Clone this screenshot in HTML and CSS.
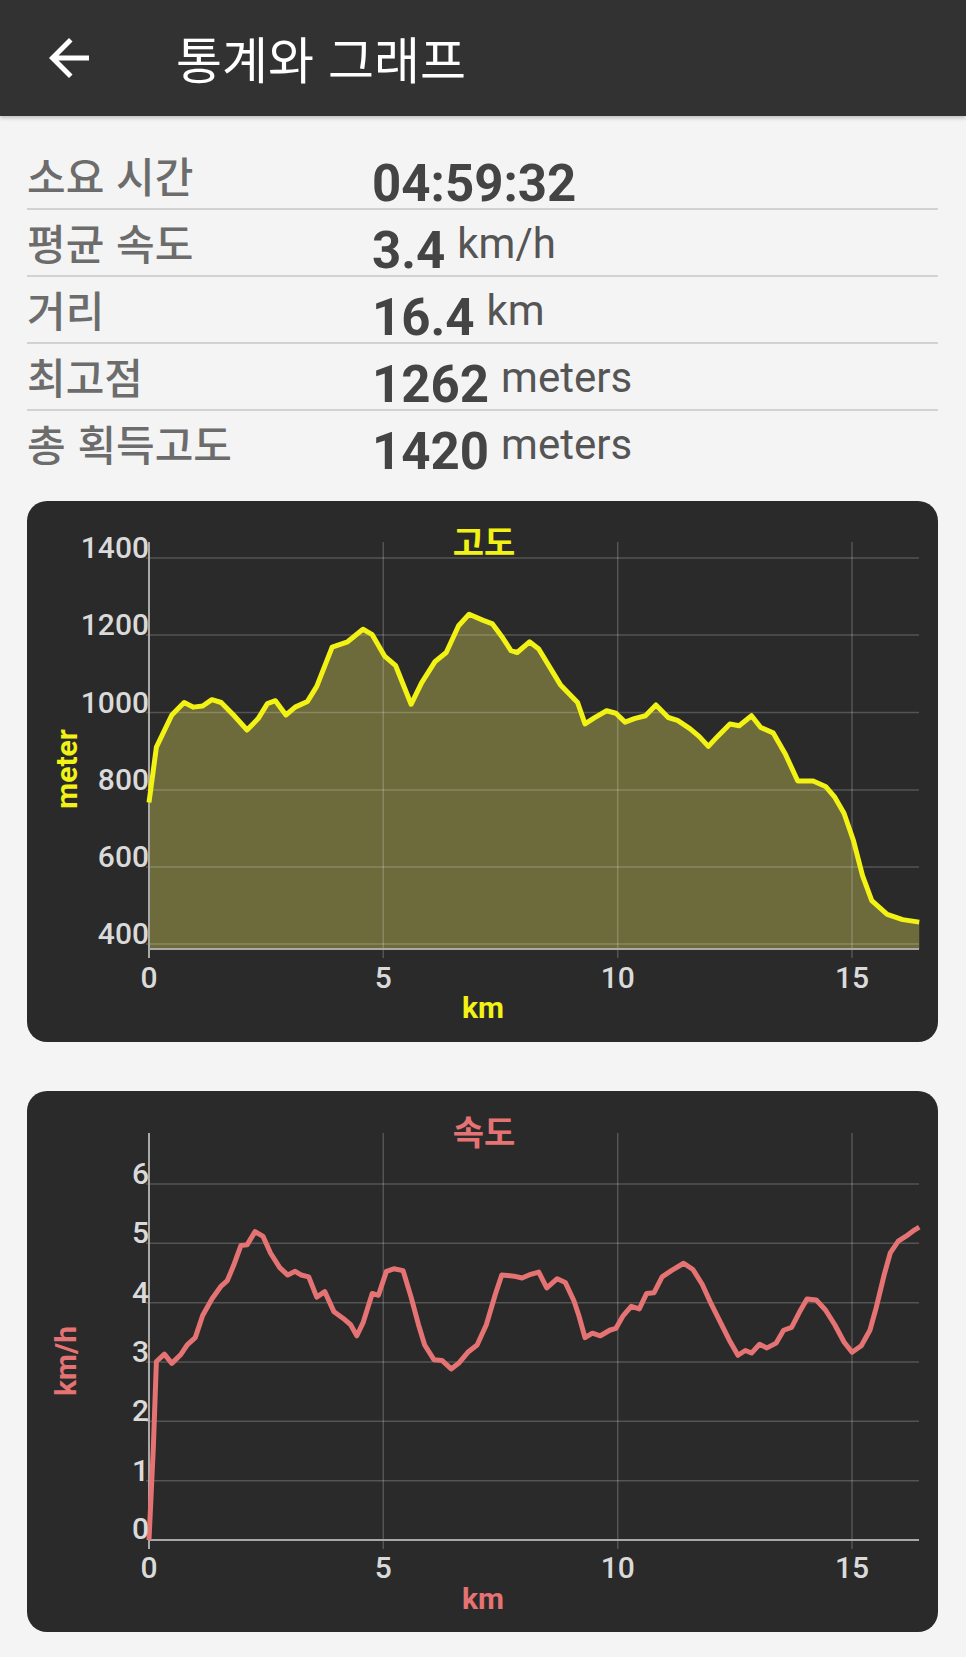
FILE: index.html
```html
<!DOCTYPE html>
<html lang="ko">
<head>
<meta charset="utf-8">
<title>통계와 그래프</title>
<link rel="stylesheet" href="styles.css">
</head>
<body>
<header class="appbar">
  <svg class="back" viewBox="0 0 24 24" width="60" height="60" aria-label="뒤로"><path d="M20 11H7.83l5.59-5.59L12 4l-8 8 8 8 1.41-1.41L7.83 13H20v-2z"/></svg>
  <h1 class="title">통계와 그래프</h1>
</header>
<main class="content">
  <section class="stats">
    <div class="row"><span class="label">소요 시간</span><span class="value">04:59:32</span></div>
    <div class="row"><span class="label">평균 속도</span><span class="value">3.4</span><span class="unit">km/h</span></div>
    <div class="row"><span class="label">거리</span><span class="value">16.4</span><span class="unit">km</span></div>
    <div class="row"><span class="label">최고점</span><span class="value">1262</span><span class="unit">meters</span></div>
    <div class="row"><span class="label">총 획득고도</span><span class="value">1420</span><span class="unit">meters</span></div>
  </section>

  <section class="card">
    <svg class="chart" viewBox="0 0 911 541" width="911" height="541">
      <polygon class="elev-fill" transform="matrix(0.6167 0 0 0.35714 -27.86 -11)" points="243,875 255,720 280,630 300,595 315,608 330,605 345,587 360,595 380,630 402,672 420,640 435,598 448,590 465,630 480,608 500,592 515,550 540,440 565,425 590,390 605,405 625,465 643,492 668,600 685,540 707,480 725,455 745,380 762,348 785,365 800,375 815,410 830,450 840,455 860,425 875,445 910,545 938,595 950,655 965,638 985,618 1000,625 1015,650 1030,640 1048,632 1065,602 1085,637 1100,645 1120,668 1135,690 1150,718 1165,690 1185,655 1200,660 1220,632 1235,665 1255,680 1275,740 1295,815 1320,815 1340,830 1355,860 1370,905 1385,980 1400,1080 1415,1150 1440,1188 1465,1203 1492,1210 1492,1285 243,1285"/>
      <g class="grid">
        <line x1="119" y1="57" x2="892" y2="57"/>
        <line x1="119" y1="134" x2="892" y2="134"/>
        <line x1="119" y1="211.5" x2="892" y2="211.5"/>
        <line x1="119" y1="289" x2="892" y2="289"/>
        <line x1="119" y1="366" x2="892" y2="366"/>
        <line x1="119" y1="443" x2="892" y2="443"/>
        <line x1="356.3" y1="41" x2="356.3" y2="457"/>
        <line x1="590.7" y1="41" x2="590.7" y2="457"/>
        <line x1="825" y1="41" x2="825" y2="457"/>
      </g>
      <g class="axis">
        <line x1="122" y1="41" x2="122" y2="457"/>
        <line x1="122" y1="448" x2="892" y2="448"/>
      </g>
      <polyline class="elev-line" transform="matrix(0.6167 0 0 0.35714 -27.86 -11)" points="243,875 255,720 280,630 300,595 315,608 330,605 345,587 360,595 380,630 402,672 420,640 435,598 448,590 465,630 480,608 500,592 515,550 540,440 565,425 590,390 605,405 625,465 643,492 668,600 685,540 707,480 725,455 745,380 762,348 785,365 800,375 815,410 830,450 840,455 860,425 875,445 910,545 938,595 950,655 965,638 985,618 1000,625 1015,650 1030,640 1048,632 1065,602 1085,637 1100,645 1120,668 1135,690 1150,718 1165,690 1185,655 1200,660 1220,632 1235,665 1255,680 1275,740 1295,815 1320,815 1340,830 1355,860 1370,905 1385,980 1400,1080 1415,1150 1440,1188 1465,1203 1492,1210"/>
      <g class="ylabels">
        <text x="122" y="57">1400</text>
        <text x="122" y="134">1200</text>
        <text x="122" y="211.5">1000</text>
        <text x="122" y="289">800</text>
        <text x="122" y="366">600</text>
        <text x="122" y="443">400</text>
      </g>
      <g class="xlabels">
        <text x="122" y="487">0</text>
        <text x="356.3" y="487">5</text>
        <text x="590.7" y="487">10</text>
        <text x="825" y="487">15</text>
      </g>
      <text class="ctitle elev" x="457" y="54">고도</text>
      <text class="xtitle elev" x="456" y="517">km</text>
      <text class="ytitle elev" transform="translate(50,268) rotate(-90)">meter</text>
    </svg>
  </section>

  <section class="card card-speed">
    <svg class="chart" viewBox="0 0 911 541" width="911" height="541">
      <g class="grid">
        <line x1="119" y1="93" x2="892" y2="93"/>
        <line x1="119" y1="152.3" x2="892" y2="152.3"/>
        <line x1="119" y1="211.7" x2="892" y2="211.7"/>
        <line x1="119" y1="271" x2="892" y2="271"/>
        <line x1="119" y1="330.3" x2="892" y2="330.3"/>
        <line x1="119" y1="389.7" x2="892" y2="389.7"/>
        <line x1="356.3" y1="42" x2="356.3" y2="458"/>
        <line x1="590.7" y1="42" x2="590.7" y2="458"/>
        <line x1="825" y1="42" x2="825" y2="458"/>
      </g>
      <g class="axis">
        <line x1="122" y1="42" x2="122" y2="458"/>
        <line x1="122" y1="449" x2="892" y2="449"/>
      </g>
      <polyline class="speed-line" transform="matrix(0.6167 0 0 0.368 -27.86 -11)" points="243,1250 250,1000 255,765 268,745 280,770 295,745 305,720 318,700 330,640 345,595 360,560 370,545 380,505 392,450 402,448 415,412 428,425 440,470 455,510 468,530 480,520 490,530 502,535 515,590 528,575 543,630 558,648 570,665 580,695 590,660 605,580 615,585 628,520 640,513 655,518 668,590 680,665 690,720 705,760 718,762 733,785 745,770 760,740 775,720 790,665 805,580 815,530 835,533 848,538 862,528 875,522 888,565 905,540 918,550 932,600 940,640 950,700 962,688 975,695 990,680 1000,675 1012,640 1025,615 1038,622 1050,580 1062,578 1075,535 1090,518 1110,498 1125,515 1140,555 1155,610 1170,660 1185,710 1198,748 1210,735 1220,742 1233,718 1245,728 1260,715 1272,680 1285,672 1298,630 1310,595 1325,598 1340,625 1355,665 1370,712 1383,740 1398,722 1412,680 1422,620 1435,530 1445,470 1458,438 1470,425 1482,410 1492,400"/>
      <g class="ylabels">
        <text x="122" y="93">6</text>
        <text x="122" y="152.3">5</text>
        <text x="122" y="211.7">4</text>
        <text x="122" y="271">3</text>
        <text x="122" y="330.3">2</text>
        <text x="122" y="389.7">1</text>
        <text x="122" y="448">0</text>
      </g>
      <g class="xlabels">
        <text x="122" y="487">0</text>
        <text x="356.3" y="487">5</text>
        <text x="590.7" y="487">10</text>
        <text x="825" y="487">15</text>
      </g>
      <text class="ctitle speed" x="457" y="54">속도</text>
      <text class="xtitle speed" x="456" y="518">km</text>
      <text class="ytitle speed" transform="translate(49,270) rotate(-90)">km/h</text>
    </svg>
  </section>
</main>
</body>
</html>
```

FILE: styles.css
```css
html, body {
  margin: 0;
  padding: 0;
}

body {
  background: #f4f4f4;
  font-family: Roboto, "Noto Sans CJK KR", sans-serif;
  min-height: 1657px;
}

.appbar {
  height: 116px;
  background: #323232;
  display: flex;
  align-items: center;
  padding-left: 39px;
  box-shadow: 0 2px 4px rgba(0, 0, 0, 0.22);
  position: relative;
}

.back {
  display: block;
  fill: #ffffff;
  flex-shrink: 0;
}

.title {
  margin: -3px 0 0 77px;
  font-family: "Noto Sans CJK KR", sans-serif;
  font-weight: 400;
  font-size: 50px;
  line-height: 50px;
  color: #ffffff;
}

.content {
  padding: 0 28px 0 27px;
}

.stats {
  padding-top: 27px;
}

.row {
  display: flex;
  align-items: flex-start;
  height: 52px;
  padding-top: 13px;
  border-bottom: 2px solid #d2d2d2;
}

.row:last-child {
  border-bottom: none;
}

.label {
  width: 345px;
  flex-shrink: 0;
  margin-top: -1px;
  font-family: "Noto Sans CJK KR", sans-serif;
  font-weight: 500;
  font-size: 42px;
  line-height: 40px;
  color: #6c6c6c;
}

.value {
  margin-top: 2px;
  font-family: Roboto, sans-serif;
  font-weight: 700;
  font-size: 51px;
  line-height: 52px;
  color: #444444;
}

.unit {
  margin-left: 12px;
  font-family: Roboto, sans-serif;
  font-weight: 400;
  font-size: 42px;
  line-height: 42px;
  color: #555555;
}

.card {
  margin-top: 25px;
  height: 541px;
  border-radius: 20px;
  background: #2a2a2a;
  overflow: hidden;
}

.card-speed {
  margin-top: 49px;
}

.chart {
  display: block;
}

.grid line {
  stroke: rgba(255, 255, 255, 0.2);
  stroke-width: 1.5;
}

.axis line {
  stroke: #a9a9a9;
  stroke-width: 2;
}

.elev-fill {
  fill: #6d6a3b;
}

.elev-line {
  fill: none;
  stroke: #f2f214;
  stroke-width: 5;
  stroke-linejoin: round;
  vector-effect: non-scaling-stroke;
}

.speed-line {
  fill: none;
  stroke: #e57373;
  stroke-width: 5;
  stroke-linejoin: round;
  vector-effect: non-scaling-stroke;
}

.ylabels text,
.xlabels text {
  font-family: Roboto, sans-serif;
  font-weight: 500;
  font-size: 30px;
  fill: #dadada;
}

.ylabels text {
  text-anchor: end;
}

.xlabels text {
  text-anchor: middle;
}

.ctitle {
  font-family: "Noto Sans CJK KR", sans-serif;
  font-weight: 700;
  font-size: 34px;
  text-anchor: middle;
}

.xtitle,
.ytitle {
  font-family: Roboto, sans-serif;
  font-weight: 700;
  font-size: 30px;
  text-anchor: middle;
}

.elev {
  fill: #f2f214;
}

.speed {
  fill: #e57373;
}
```
